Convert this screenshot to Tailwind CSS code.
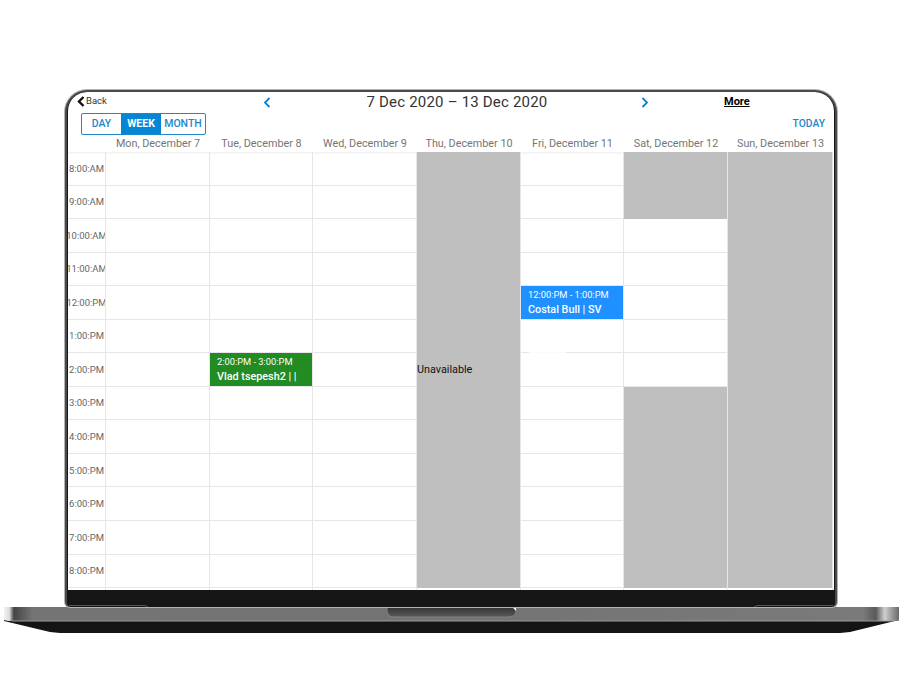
<!DOCTYPE html>
<html lang="en">
<head>
    <meta charset="UTF-8">
    <title>Weekly calendar</title>
    <script src="https://cdn.jsdelivr.net/npm/@tailwindcss/browser@4"></script>
</head>
<body class="bg-white overflow-hidden font-['Roboto',sans-serif]">
    <div class="w-[900px] h-[675px] pt-[90px] overflow-hidden">
        <!-- laptop lid -->
        <section class="relative ml-[65px] w-[772px] h-[517px] rounded-t-[22px] rounded-b-[5px] bg-[#161616] border-2 border-[#4a4a4a] border-b-0 shadow-[0_0_0_1px_#b4b4b4] overflow-hidden">
            <div class="h-[498px] bg-white ml-px mr-[1px] rounded-t-[19px] overflow-hidden">
                <!-- top bar -->
                <div class="h-[21px] flex items-center">
                    <div class="ml-[9px] -mt-[3px] w-[160px] flex items-center text-[9.5px] text-[#333]">
                        <svg width="8" height="11" viewBox="0 0 8 11"><path d="M6.5 1 2 5.5 6.5 10" fill="none" stroke="#111" stroke-width="2.4"/></svg>
                        <span class="ml-px">Back</span>
                    </div>
                    <svg class="ml-[26px]" width="8" height="11" viewBox="0 0 8 11"><path d="M6.5 1 2 5.5 6.5 10" fill="none" stroke="#0a84d0" stroke-width="1.8"/></svg>
                    <div class="w-[370px] pl-[2px] text-center text-[15px] tracking-[0.2px] text-[#333]">7 Dec 2020 – 13 Dec 2020</div>
                    <svg width="8" height="11" viewBox="0 0 8 11"><path d="M1.5 1 6 5.5 1.5 10" fill="none" stroke="#0a84d0" stroke-width="1.8"/></svg>
                    <div class="ml-[75px] text-[11px] font-bold text-black underline">More</div>
                </div>
                <!-- view switch -->
                <div class="h-[22px] flex items-center justify-between pl-[13px] pr-[9px]">
                    <div class="flex h-[22px] w-[125px] border border-[#1e88c9] rounded-[2px] text-[10.5px] font-medium leading-[20px] text-center">
                        <div class="w-[39px] text-[#1e88c9]">DAY</div>
                        <div class="w-[40px] bg-[#0586d4] text-white font-bold">WEEK</div>
                        <div class="flex-1 text-[#1e88c9]">MONTH</div>
                    </div>
                    <div class="text-[10.3px] font-medium text-[#1e88c9]">TODAY</div>
                </div>
                <!-- day headers -->
                <div id="heads" class="flex h-[17px] pl-[38px] text-[10.8px] leading-[18px] text-[#757575] text-center shadow-[0_1px_2px_rgba(0,0,0,0.08)]"></div>
                <!-- week grid -->
                <div class="flex h-[438px]">
                    <div id="times" class="w-[38px] shrink-0 border-r border-[#e6e6e6] overflow-hidden"></div>
                    <div id="days" class="flex"></div>
                </div>
            </div>
            <!-- hinge lines on the lower bezel -->
            <svg class="absolute left-0 bottom-0" width="768" height="5" viewBox="0 0 768 5">
                <path d="M2 3.5H77q2 0 4 1.5M766 3.5H691q-2 0-4 1.5" fill="none" stroke="#555" stroke-width="1"/>
            </svg>
        </section>
        <!-- laptop base -->
        <svg class="block -mt-px" width="900" height="30" viewBox="0 0 900 30">
            <defs>
                <linearGradient id="edge" x1="0" x2="1" y1="0" y2="0">
                    <stop offset="0" stop-color="#f2f2f2"/>
                    <stop offset="0.006" stop-color="#dcdcdc"/>
                    <stop offset="0.011" stop-color="#454545"/>
                    <stop offset="0.032" stop-color="#747474"/>
                    <stop offset="0.5" stop-color="#737373"/>
                    <stop offset="0.96" stop-color="#7a7a7a"/>
                    <stop offset="0.974" stop-color="#5a5a5a"/>
                    <stop offset="0.984" stop-color="#cfcfcf"/>
                    <stop offset="0.99" stop-color="#a8a8a8"/>
                    <stop offset="1" stop-color="#6a6a6a"/>
                </linearGradient>
                <linearGradient id="notch" x1="0" x2="0" y1="0" y2="1">
                    <stop offset="0" stop-color="#333"/>
                    <stop offset="1" stop-color="#5a5a5a"/>
                </linearGradient>
            </defs>
            <path d="M4 1H899V14L850 26L840 27H60L50 26L4 15Z" fill="#141414"/>
            <path d="M4 1H899V14.5L896 15H8L4 14Z" fill="url(#edge)"/>
            <path d="M12 15H893" stroke="#9a9a9a" stroke-width="1"/>
            <path d="M387 1H516V4Q516 11 509 11H394Q387 11 387 4Z" fill="url(#notch)" stroke="#8a8a8a" stroke-width="0.8"/>
            <path d="M511 1h5v4q-2-3-5-4Z" fill="#fff"/>
        </svg>
    </div>
    <script>
        var names = ['Mon, December 7', 'Tue, December 8', 'Wed, December 9', 'Thu, December 10', 'Fri, December 11', 'Sat, December 12', 'Sun, December 13'];
        var widths = [104, 103, 104, 104, 103, 104, 105];
        var hours = ['8:00:AM', '9:00:AM', '10:00:AM', '11:00:AM', '12:00:PM', '1:00:PM', '2:00:PM', '3:00:PM', '4:00:PM', '5:00:PM', '6:00:PM', '7:00:PM', '8:00:PM'];
        var rowH = 33.55;
        // which hour slots are greyed out per day
        var blocked = [[], [], [], 'all', [], [0, 1, 7, 8, 9, 10, 11, 12], 'all'];
        var events = {
            '1-6': { time: '2:00:PM - 3:00:PM', title: 'Vlad tsepesh2 | |', cls: 'bg-[#228b22]' },
            '4-4': { time: '12:00:PM - 1:00:PM', title: 'Costal Bull | SV', cls: 'bg-[#1e90ff]' }
        };

        names.forEach(function(name, i) {
            var head = document.createElement('div');
            head.textContent = name;
            head.style.width = widths[i] + 'px';
            document.getElementById('heads').appendChild(head);
        });

        hours.forEach(function(hour) {
            var slot = document.createElement('div');
            slot.className = 'flex items-center justify-center pt-px text-[9.5px] text-[#666] whitespace-nowrap border-b border-[#e6e6e6]';
            slot.style.height = rowH + 'px';
            slot.textContent = hour;
            document.getElementById('times').appendChild(slot);
        });

        names.forEach(function(name, d) {
            var col = document.createElement('div');
            col.className = 'relative border-r border-[#e6e6e6]';
            col.style.width = widths[d] + 'px';
            hours.forEach(function(hour, h) {
                var grey = blocked[d] === 'all' || blocked[d].indexOf(h) > -1;
                var cell = document.createElement('div');
                cell.className = grey ? 'bg-[#bfbfbf]' : 'border-b border-[#e6e6e6]';
                cell.style.height = rowH + 'px';
                var ev = events[d + '-' + h];
                if (ev) {
                    var box = document.createElement('div');
                    box.className = 'h-full text-white pl-[7px] pt-[2px] ' + ev.cls;
                    box.innerHTML = '<div class="text-[9.3px] leading-[14px]">' + ev.time + '</div><div class="mt-px text-[10.8px] font-medium leading-[14px]">' + ev.title + '</div>';
                    cell.appendChild(box);
                }
                if (d === 3 && h === 6) {
                    cell.className += ' flex items-center text-[10.8px] text-[#111]';
                    cell.textContent = 'Unavailable';
                }
                // faint white mark left on the Friday 2pm line
                if (d === 4 && h === 5) {
                    cell.className += ' relative';
                    cell.innerHTML = '<div class="absolute left-[8px] bottom-[-1px] w-[37px] h-px bg-white/80"></div>';
                }
                col.appendChild(cell);
            });
            document.getElementById('days').appendChild(col);
        });
    </script>
</body>
</html>
